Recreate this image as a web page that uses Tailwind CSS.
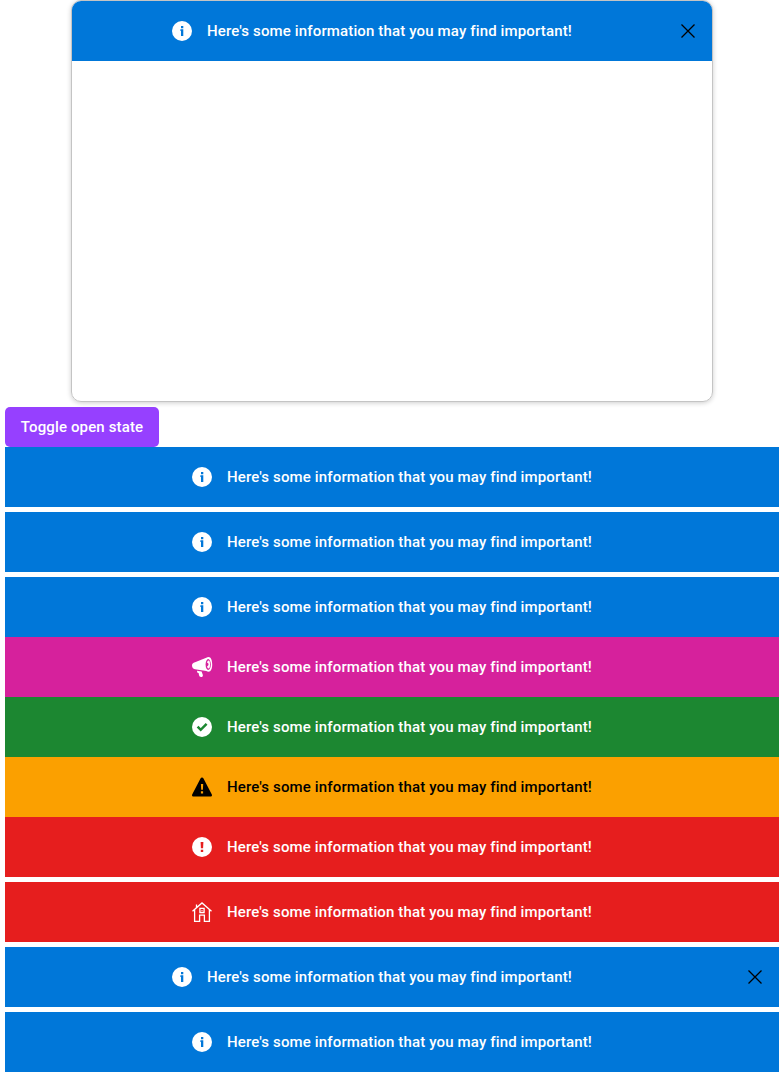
<!DOCTYPE html>
<html lang="en">
<head>
<meta charset="utf-8">
<title>Banners</title>
<script src="https://cdn.jsdelivr.net/npm/@tailwindcss/browser@4"></script>
</head>
<body class="bg-white h-[1072px] overflow-hidden font-['Roboto','Liberation_Sans',sans-serif] text-[15px] leading-5 font-medium tracking-[0.14px] text-white">
<svg class="hidden">
  <symbol id="info" viewBox="0 0 20 20"><circle cx="10" cy="10" r="10" fill="currentColor"/><path d="M8.400 8.200h2.900V15H9V9.900h-.6zM9 5h2.300v2.200H9z" fill="#0077d9"/></symbol>
  <symbol id="horn" viewBox="0 0 20 20" overflow="visible"><path d="M0 8.500C0 6.700 1 5.900 3 5.200L14.300.8C15 .3 15.800 0 16.500 0 19 0 20.200 3.500 20.200 7.500s-1.200 7.200-3.700 7.200c-.8 0-1.500-.3-2.200-.8L3 12.200C1 11.700 0 10.500 0 8.500z" fill="currentColor"/><ellipse cx="16.200" cy="7.500" rx="2.600" ry="5.400" fill="#d6219c"/><ellipse cx="16.500" cy="7.500" rx="1.500" ry="3.900" fill="currentColor"/><path d="M15 5.800v3.400c2 0 2-3.400 0-3.400z" fill="#d6219c"/><path d="M5 13.700l4.600.8 1.200 3.200c.4 1.400-.5 2.400-1.700 2.400-1.300 0-1.800-.8-2.100-2L6.600 16.100c-1 .1-1.500-1-1.600-2.400z" fill="currentColor"/></symbol>
  <symbol id="check" viewBox="0 0 20 20"><circle cx="10" cy="10" r="10" fill="currentColor"/><path d="M5.600 9.700l3.100 3.100 5.900-5.900" fill="none" stroke="#1c8731" stroke-width="2.500"/></symbol>
  <symbol id="warning" viewBox="0 0 20 20"><path d="M10 .4c.7 0 1.100.4 1.500 1.100l8.200 15.700c.7 1.300.1 2.300-1.300 2.300H1.600C.2 19.500-.4 18.500.3 17.200L8.500 1.500C8.900.8 9.300.4 10 .4z" fill="currentColor"/><path d="M8.900 7h2.300l-.3 5.700H9.200zM8.900 14.200h2.200v2.200H8.900z" fill="#fba000"/></symbol>
  <symbol id="error" viewBox="0 0 20 20"><circle cx="10" cy="10" r="10" fill="currentColor"/><path d="M8.600 5h2.800l-.3 6.300H8.900zM8.800 12.800h2.400V15H8.800z" fill="#e61e1e"/></symbol>
  <symbol id="house" viewBox="0 0 20 20"><path d="M.5 9.300L10 .9l9.500 8.400M2.600 7.700v11.700h5v-6.200h4.800v6.200h5V7.700M4.500 5.500v-3M7.900 6.300h4.200v4.200H7.900z" fill="none" stroke="currentColor" stroke-width="1.300"/><path d="M9.500 7.900h1v1h-1z" fill="currentColor"/></symbol>
  <symbol id="close" viewBox="0 0 14 14"><path d="M.5.5l13 13M13.500.5l-13 13" fill="none" stroke="currentColor" stroke-width="1.300"/></symbol>
</svg>

<div class="mx-auto w-[642px] h-[402px] rounded-[10px] border border-[#c4c4c4] shadow-[0_1px_5px_rgba(0,0,0,0.2)] overflow-hidden">
  <div class="flex h-[60px] items-center bg-[#0077d9]">
    <div class="flex flex-1 items-center justify-center"><div class="flex w-[400px] items-center gap-[15px]"><svg class="size-5 shrink-0 overflow-visible"><use href="#info"/></svg><span class="whitespace-nowrap">Here's some information that you may find important!</span></div></div>
    <button class="mr-[17px] w-[23px] flex justify-end text-black" aria-label="Close"><svg class="size-[14px]"><use href="#close"/></svg></button>
  </div>
</div>

<div class="px-[5px] pt-[5px]">
  <button class="block h-10 w-[154px] rounded-[5px] bg-[#9640ff]">Toggle open state</button>
  <div class="flex flex-col gap-[5px]">
    <div class="flex h-[60px] items-center justify-center bg-[#0077d9]"><div class="flex w-[400px] items-center gap-[15px]"><svg class="size-5 shrink-0 overflow-visible"><use href="#info"/></svg><span class="whitespace-nowrap">Here's some information that you may find important!</span></div></div>
    <div class="flex h-[60px] items-center justify-center bg-[#0077d9]"><div class="flex w-[400px] items-center gap-[15px]"><svg class="size-5 shrink-0 overflow-visible"><use href="#info"/></svg><span class="whitespace-nowrap">Here's some information that you may find important!</span></div></div>
    <div>
      <div class="flex h-[60px] items-center justify-center bg-[#0077d9]"><div class="flex w-[400px] items-center gap-[15px]"><svg class="size-5 shrink-0 overflow-visible"><use href="#info"/></svg><span class="whitespace-nowrap">Here's some information that you may find important!</span></div></div>
      <div class="flex h-[60px] items-center justify-center bg-[#d6219c]"><div class="flex w-[400px] items-center gap-[15px]"><svg class="size-5 shrink-0 overflow-visible"><use href="#horn"/></svg><span class="whitespace-nowrap">Here's some information that you may find important!</span></div></div>
      <div class="flex h-[60px] items-center justify-center bg-[#1c8731]"><div class="flex w-[400px] items-center gap-[15px]"><svg class="size-5 shrink-0 overflow-visible"><use href="#check"/></svg><span class="whitespace-nowrap">Here's some information that you may find important!</span></div></div>
      <div class="flex h-[60px] items-center justify-center bg-[#fba000] text-black"><div class="flex w-[400px] items-center gap-[15px]"><svg class="size-5 shrink-0 overflow-visible"><use href="#warning"/></svg><span class="whitespace-nowrap">Here's some information that you may find important!</span></div></div>
      <div class="flex h-[60px] items-center justify-center bg-[#e61e1e]"><div class="flex w-[400px] items-center gap-[15px]"><svg class="size-5 shrink-0 overflow-visible"><use href="#error"/></svg><span class="whitespace-nowrap">Here's some information that you may find important!</span></div></div>
    </div>
    <div class="flex h-[60px] items-center justify-center bg-[#e61e1e]"><div class="flex w-[400px] items-center gap-[15px]"><svg class="size-5 shrink-0 overflow-visible"><use href="#house"/></svg><span class="whitespace-nowrap">Here's some information that you may find important!</span></div></div>
    <div class="flex h-[60px] items-center bg-[#0077d9]">
      <div class="flex flex-1 items-center justify-center"><div class="flex w-[400px] items-center gap-[15px]"><svg class="size-5 shrink-0 overflow-visible"><use href="#info"/></svg><span class="whitespace-nowrap">Here's some information that you may find important!</span></div></div>
      <button class="mr-[17px] w-[23px] flex justify-end text-black" aria-label="Close"><svg class="size-[14px]"><use href="#close"/></svg></button>
    </div>
    <div class="flex h-[60px] items-center justify-center bg-[#0077d9]"><div class="flex w-[400px] items-center gap-[15px]"><svg class="size-5 shrink-0 overflow-visible"><use href="#info"/></svg><span class="whitespace-nowrap">Here's some information that you may find important!</span></div></div>
  </div>
</div>
</body>
</html>
